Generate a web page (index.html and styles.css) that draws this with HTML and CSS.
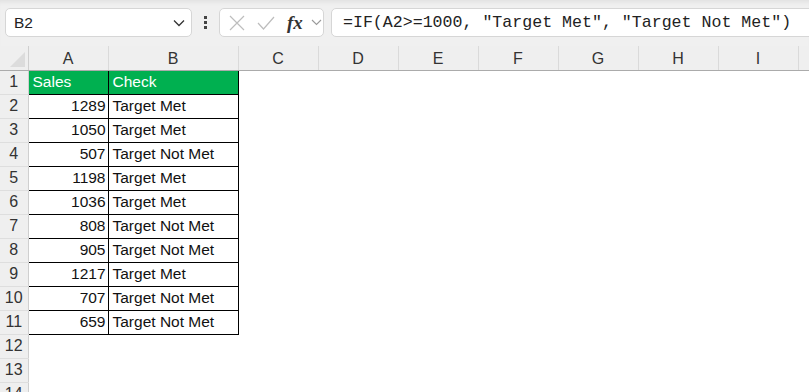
FILE: index.html
```html
<!DOCTYPE html>
<html lang="en">
  <head>
    <meta charset="utf-8"/>
    <title>Sheet</title>
    <link rel="stylesheet" href="styles.css">
  </head>
  <body>
    <div class="toolbar">
      <div class="namebox">
        <span class="name">B2</span>
        <svg class="chev" width="12" height="8" viewBox="0 0 12 8"><path d="M1 1.5 L6 6.5 L11 1.5" fill="none" stroke="#333" stroke-width="1.3"/></svg>
      </div>
      <div class="grip"><i></i><i></i><i></i></div>
      <div class="fxbox">
        <svg width="16" height="16" viewBox="0 0 16 16"><path d="M1 1 L15 15 M15 1 L1 15" stroke="#bdbdbd" stroke-width="1.2"/></svg>
        <svg class="tick" width="18" height="14" viewBox="0 0 18 14"><path d="M1 7 L6.5 13 L17 1" fill="none" stroke="#bdbdbd" stroke-width="1.2"/></svg>
        <span class="fx">fx</span>
        <svg width="11" height="7" viewBox="0 0 11 7"><path d="M1 1 L5.5 5.5 L10 1" fill="none" stroke="#9a9a9a" stroke-width="1.1"/></svg>
      </div>
      <div class="formula">=IF(A2&gt;=1000, "Target Met", "Target Not Met")</div>
    </div>
    <table class="sheet">
      <colgroup>
        <col class="rh"><col class="c-a"><col class="c-b"><col class="c"><col class="c"><col class="c"><col class="c"><col class="c"><col class="c"><col class="c"><col class="c">
      </colgroup>
      <thead>
        <tr>
          <th class="corner"><svg width="17" height="17" viewBox="0 0 17 17"><path d="M16 1 L16 16 L1 16 Z" fill="#dcdcdc"/></svg></th>
          <th>A</th><th>B</th><th>C</th><th>D</th><th>E</th><th>F</th><th>G</th><th>H</th><th>I</th><th></th>
        </tr>
      </thead>
      <tbody>
        <tr><th>1</th><td class="box head">Sales</td><td class="box head">Check</td><td></td><td></td><td></td><td></td><td></td><td></td><td></td><td></td></tr>
        <tr><th>2</th><td class="box num">1289</td><td class="box">Target Met</td><td></td><td></td><td></td><td></td><td></td><td></td><td></td><td></td></tr>
        <tr><th>3</th><td class="box num">1050</td><td class="box">Target Met</td><td></td><td></td><td></td><td></td><td></td><td></td><td></td><td></td></tr>
        <tr><th>4</th><td class="box num">507</td><td class="box">Target Not Met</td><td></td><td></td><td></td><td></td><td></td><td></td><td></td><td></td></tr>
        <tr><th>5</th><td class="box num">1198</td><td class="box">Target Met</td><td></td><td></td><td></td><td></td><td></td><td></td><td></td><td></td></tr>
        <tr><th>6</th><td class="box num">1036</td><td class="box">Target Met</td><td></td><td></td><td></td><td></td><td></td><td></td><td></td><td></td></tr>
        <tr><th>7</th><td class="box num">808</td><td class="box">Target Not Met</td><td></td><td></td><td></td><td></td><td></td><td></td><td></td><td></td></tr>
        <tr><th>8</th><td class="box num">905</td><td class="box">Target Not Met</td><td></td><td></td><td></td><td></td><td></td><td></td><td></td><td></td></tr>
        <tr><th>9</th><td class="box num">1217</td><td class="box">Target Met</td><td></td><td></td><td></td><td></td><td></td><td></td><td></td><td></td></tr>
        <tr><th>10</th><td class="box num">707</td><td class="box">Target Not Met</td><td></td><td></td><td></td><td></td><td></td><td></td><td></td><td></td></tr>
        <tr><th>11</th><td class="box num">659</td><td class="box">Target Not Met</td><td></td><td></td><td></td><td></td><td></td><td></td><td></td><td></td></tr>
        <tr><th>12</th><td></td><td></td><td></td><td></td><td></td><td></td><td></td><td></td><td></td><td></td></tr>
        <tr><th>13</th><td></td><td></td><td></td><td></td><td></td><td></td><td></td><td></td><td></td><td></td></tr>
        <tr><th>14</th><td></td><td></td><td></td><td></td><td></td><td></td><td></td><td></td><td></td><td></td></tr>
      </tbody>
    </table>
  </body>
</html>
```

FILE: styles.css
```css
* {
  box-sizing: border-box;
}
body {
  margin: 0;
  overflow: hidden;
  background: #fff;
  font-family: "Liberation Sans", Arial, sans-serif;
  color: #222;
}
.toolbar {
  height: 46px;
  display: flex;
  align-items: flex-start;
  padding: 8px 0 0 5px;
  background: #f0f0f0;
  box-shadow: inset 0 5px 4px -3px #e0e0e0;
  white-space: nowrap;
}
.toolbar > div {
  flex-shrink: 0;
}
.namebox {
  width: 187px;
  height: 29px;
  display: flex;
  align-items: center;
  justify-content: space-between;
  padding: 0 6px 0 8px;
  background: #fff;
  border: 1px solid #d6d6d6;
  border-radius: 5px;
  font-size: 15.5px;
}
.grip {
  width: 27px;
  height: 29px;
  display: flex;
  flex-direction: column;
  align-items: center;
  justify-content: center;
  gap: 2px;
}
.grip i {
  width: 3px;
  height: 3px;
  background: #444;
}
.fxbox {
  width: 105px;
  height: 29px;
  display: flex;
  align-items: center;
  padding: 0 0 0 9px;
  background: #fff;
  border: 1px solid #d6d6d6;
  border-radius: 5px;
}
.tick {
  margin-left: 12px;
}
.fx {
  margin-left: 12px;
  margin-right: 8px;
  font-family: "Liberation Serif", serif;
  font-style: italic;
  font-weight: bold;
  font-size: 19px;
  color: #333;
}
.formula {
  margin-left: 7px;
  width: 490px;
  height: 29px;
  padding: 4px 0 0 11px;
  background: #fff;
  border: 1px solid #d6d6d6;
  border-radius: 5px;
  font-family: "Liberation Mono", monospace;
  font-size: 16.6px;
  color: #222;
}
.sheet {
  width: 878px;
  table-layout: fixed;
  border-collapse: collapse;
  font-size: 15.5px;
}
.rh { width: 28px; }
.c-a { width: 80px; }
.c-b { width: 130px; }
.c { width: 80px; }
.sheet tr {
  height: 24px;
}
.sheet th {
  padding: 0;
  font-weight: normal;
  color: #333;
  background: #efefef;
  text-align: center;
}
.sheet thead th {
  border-right: 1px solid #dadada;
  border-bottom: 1px solid #ababab;
  font-size: 16px;
  padding-top: 2px;
}
.sheet thead th.corner {
  border-right: 1px solid #cfcfcf;
  text-align: right;
  vertical-align: bottom;
  padding: 0 2px 2px 0;
}
.corner svg {
  display: block;
  margin-left: auto;
}
.sheet tbody th {
  border-right: 1px solid #cfcfcf;
  border-bottom: 1px solid #dedede;
  font-size: 16px;
}
.sheet td {
  padding: 0 3px 0 4px;
  white-space: nowrap;
  overflow: hidden;
}
.sheet td.box {
  border: 1px solid #000;
  color: #111;
}
.sheet td.head {
  background: #00b050;
  color: #fff;
}
.sheet td.num {
  text-align: right;
  padding-right: 2px;
}
```
